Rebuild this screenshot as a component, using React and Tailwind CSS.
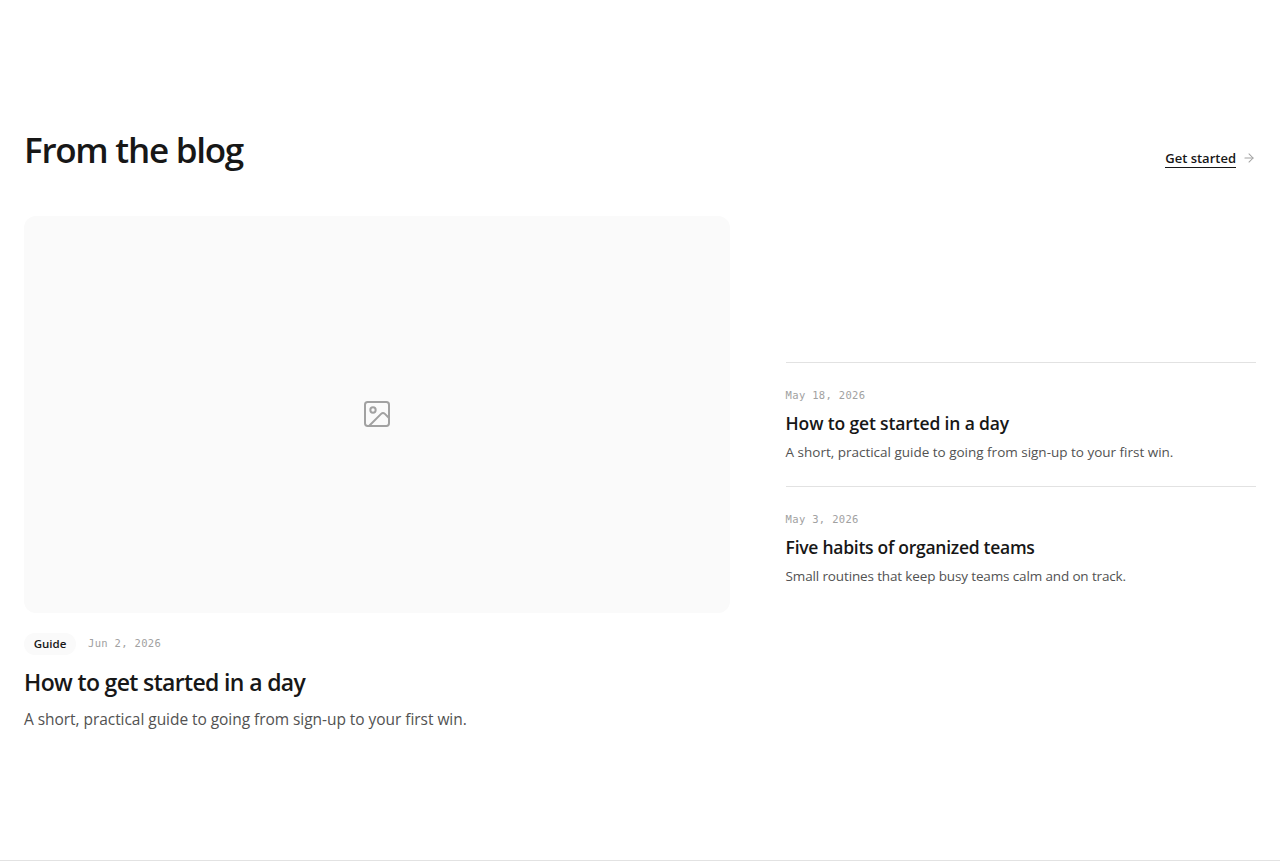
import React from "react";
import { ArrowRight, Image } from "lucide-react";

const posts = [
  {
    date: "May 18, 2026",
    title: "How to get started in a day",
    text: "A short, practical guide to going from sign-up to your first win.",
    titleClass: "tracking-[-0.14px]",
    textClass: "tracking-[-0.01px]",
  },
  {
    date: "May 3, 2026",
    title: "Five habits of organized teams",
    text: "Small routines that keep busy teams calm and on track.",
    titleClass: "tracking-[-0.27px]",
    textClass: "tracking-[-0.14px]",
  },
];

const PostDate = ({ children }) => (
  <time className="block font-['DejaVu_Sans_Mono',monospace] text-[10.5px] leading-4 tracking-[0.33px] text-[#a1a1a1]">
    {children}
  </time>
);

const PostRow = ({ post }) => (
  <a href="#" className="block h-31 border-t border-[#e2e2e2] pt-6 last:h-[98px]">
    <PostDate>{post.date}</PostDate>
    <h3 className={`mt-[7px] text-[17.5px] leading-[26px] font-semibold whitespace-nowrap ${post.titleClass}`}>
      {post.title}
    </h3>
    <p className={`mt-[5px] text-[13.5px] leading-[22px] whitespace-nowrap text-[#525252] ${post.textClass}`}>
      {post.text}
    </p>
  </a>
);

const App = () => {
  return (
    <section className="h-[861px] overflow-hidden border-b border-[#e2e2e2] bg-white px-6 pt-32 font-['Open_Sans',sans-serif] text-[#171717]">
      {/* Section header */}
      <div className="flex h-10 items-end justify-between">
        <h2 className="text-[35px] leading-9 font-semibold tracking-[-1.25px] whitespace-nowrap">
          From the blog
        </h2>
        <a href="#" className="flex items-center gap-1.5 text-[13px] leading-[18px] font-semibold">
          <span className="border-b border-[#171717]">Get started</span>
          <ArrowRight className="mb-0.5 size-3.5 text-[#a1a1a1]" strokeWidth={1.75} />
        </a>
      </div>

      <div className="mt-12 grid grid-cols-[1.5fr_1fr] items-center gap-14">
        {/* Featured post */}
        <a href="#" className="block min-w-0">
          <div className="flex aspect-video items-center justify-center rounded-xl bg-[#fafafa]">
            <Image className="size-8 text-[#a1a1a1]" strokeWidth={1.5} />
          </div>
          <div className="mt-5 flex items-center gap-3">
            <span className="flex h-[22px] w-[52px] items-center justify-center rounded-full bg-[#fafafa] text-[11.5px] font-semibold">
              Guide
            </span>
            <div className="pb-0.5">
              <PostDate>Jun 2, 2026</PostDate>
            </div>
          </div>
          <h3 className="mt-[11px] text-[23px] leading-8 font-semibold tracking-[-0.65px] whitespace-nowrap">
            How to get started in a day
          </h3>
          <p className="mt-[9px] text-[15.5px] leading-6 tracking-[-0.05px] whitespace-nowrap text-[#525252]">
            A short, practical guide to going from sign-up to your first win.
          </p>
        </a>

        {/* Other posts */}
        <div className="min-w-0">
          {posts.map((post) => (
            <PostRow key={post.date} post={post} />
          ))}
        </div>
      </div>
    </section>
  );
};

export default App;
